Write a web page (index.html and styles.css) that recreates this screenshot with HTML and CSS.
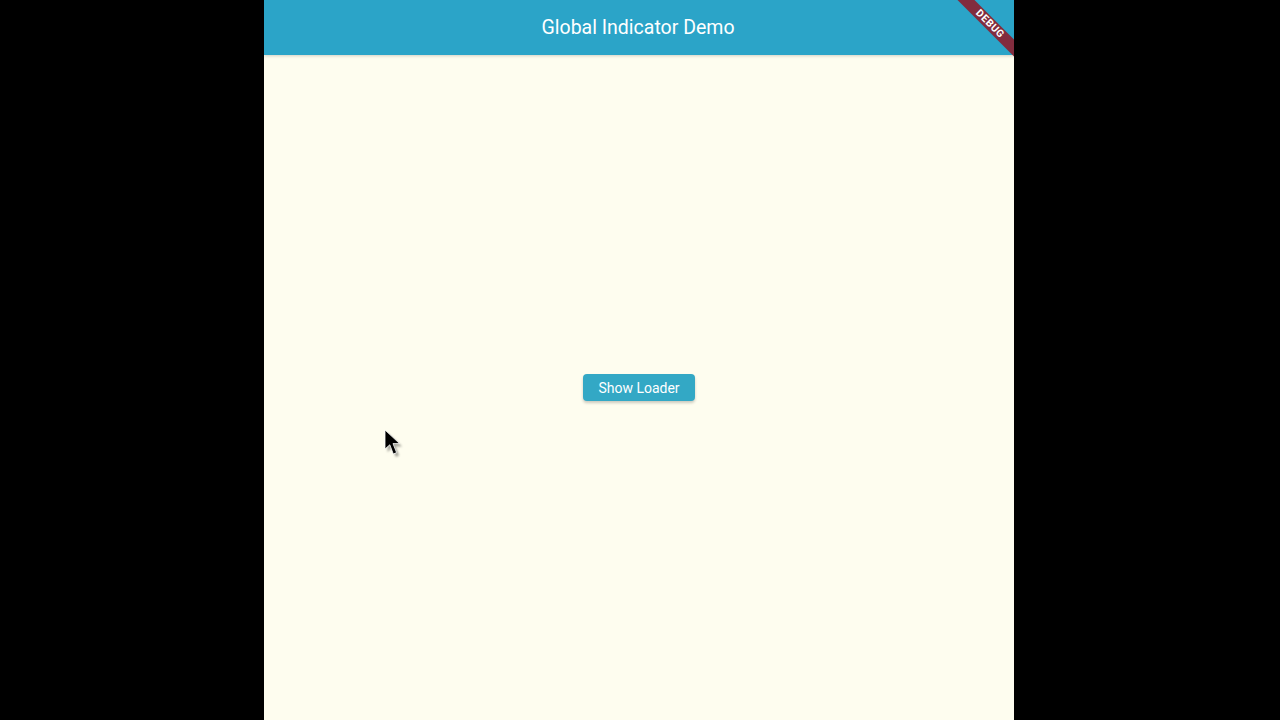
FILE: index.html
```html
<!DOCTYPE html>
<html lang="en">
<head>
<meta charset="utf-8">
<title>Global Indicator Demo</title>
<link rel="stylesheet" href="styles.css">
</head>
<body>
<div class="stage">
  <div class="app">
    <header class="appbar">
      <h1 class="title">Global Indicator Demo</h1>
      <div class="banner"><span>DEBUG</span></div>
    </header>
    <main class="content">
      <button class="btn" type="button">Show Loader</button>
    </main>
    <svg class="cursor" width="24" height="36" viewBox="0 0 24 36" aria-hidden="true">
      <defs>
        <filter id="blur" x="-30%" y="-30%" width="160%" height="160%">
          <feGaussianBlur stdDeviation="1.2"/>
        </filter>
      </defs>
      <path d="M1 1 L1 20 L5.8 15.8 L9.3 25 L12.6 23.6 L9 14.6 L15.6 14.6 Z" fill="rgba(0,0,0,0.35)" transform="translate(2.5,3)" filter="url(#blur)"/>
      <path d="M1 1 L1 20 L5.8 15.8 L9.3 25 L12.6 23.6 L9 14.6 L15.6 14.6 Z" fill="#000" stroke="#fff" stroke-width="0.8" stroke-linejoin="round"/>
    </svg>
  </div>
</div>
</body>
</html>
```
FILE: styles.css
```css
html, body {
  margin: 0;
  padding: 0;
  height: 100%;
  background: #000;
}
.stage {
  display: flex;
  justify-content: flex-start;
  padding-left: 264px;
  height: 720px;
}
.app {
  position: relative;
  width: 750px;
  height: 720px;
  display: flex;
  flex-direction: column;
  background: #fefdef;
  overflow: hidden;
  font-family: Roboto, "Noto Sans", sans-serif;
}
.appbar {
  position: relative;
  height: 55px;
  flex: 0 0 55px;
  background: #2ba4c8;
  display: flex;
  align-items: center;
  justify-content: center;
  box-shadow: 0 1px 3px rgba(0,0,0,0.18);
  z-index: 1;
}
.title {
  margin: 0;
  color: #fff;
  font-size: 19.5px;
  font-weight: 400;
  letter-spacing: 0;
  line-height: 1;
  transform: translateX(-1px);
}
.banner {
  position: absolute;
  top: 0;
  right: 0;
  width: 80px;
  height: 80px;
  overflow: hidden;
  pointer-events: none;
}
.banner span {
  position: absolute;
  left: 6px;
  top: 18px;
  width: 100px;
  height: 12px;
  line-height: 12px;
  background: #822c3e;
  color: #fff;
  font-size: 10.2px;
  font-weight: 700;
  letter-spacing: 0.6px;
  text-align: center;
  transform: rotate(45deg);
}
.content {
  flex: 1;
  display: flex;
  align-items: center;
  justify-content: center;
}
.btn {
  width: 112px;
  height: 27px;
  border: 0;
  border-radius: 4px;
  background: #33a8c5;
  color: #fff;
  font-family: Roboto, "Noto Sans", sans-serif;
  font-size: 14px;
  box-shadow: 0 2px 3px rgba(0,0,0,0.2);
  padding: 0;
}
.cursor {
  position: absolute;
  left: 120px;
  top: 429px;
}
```
